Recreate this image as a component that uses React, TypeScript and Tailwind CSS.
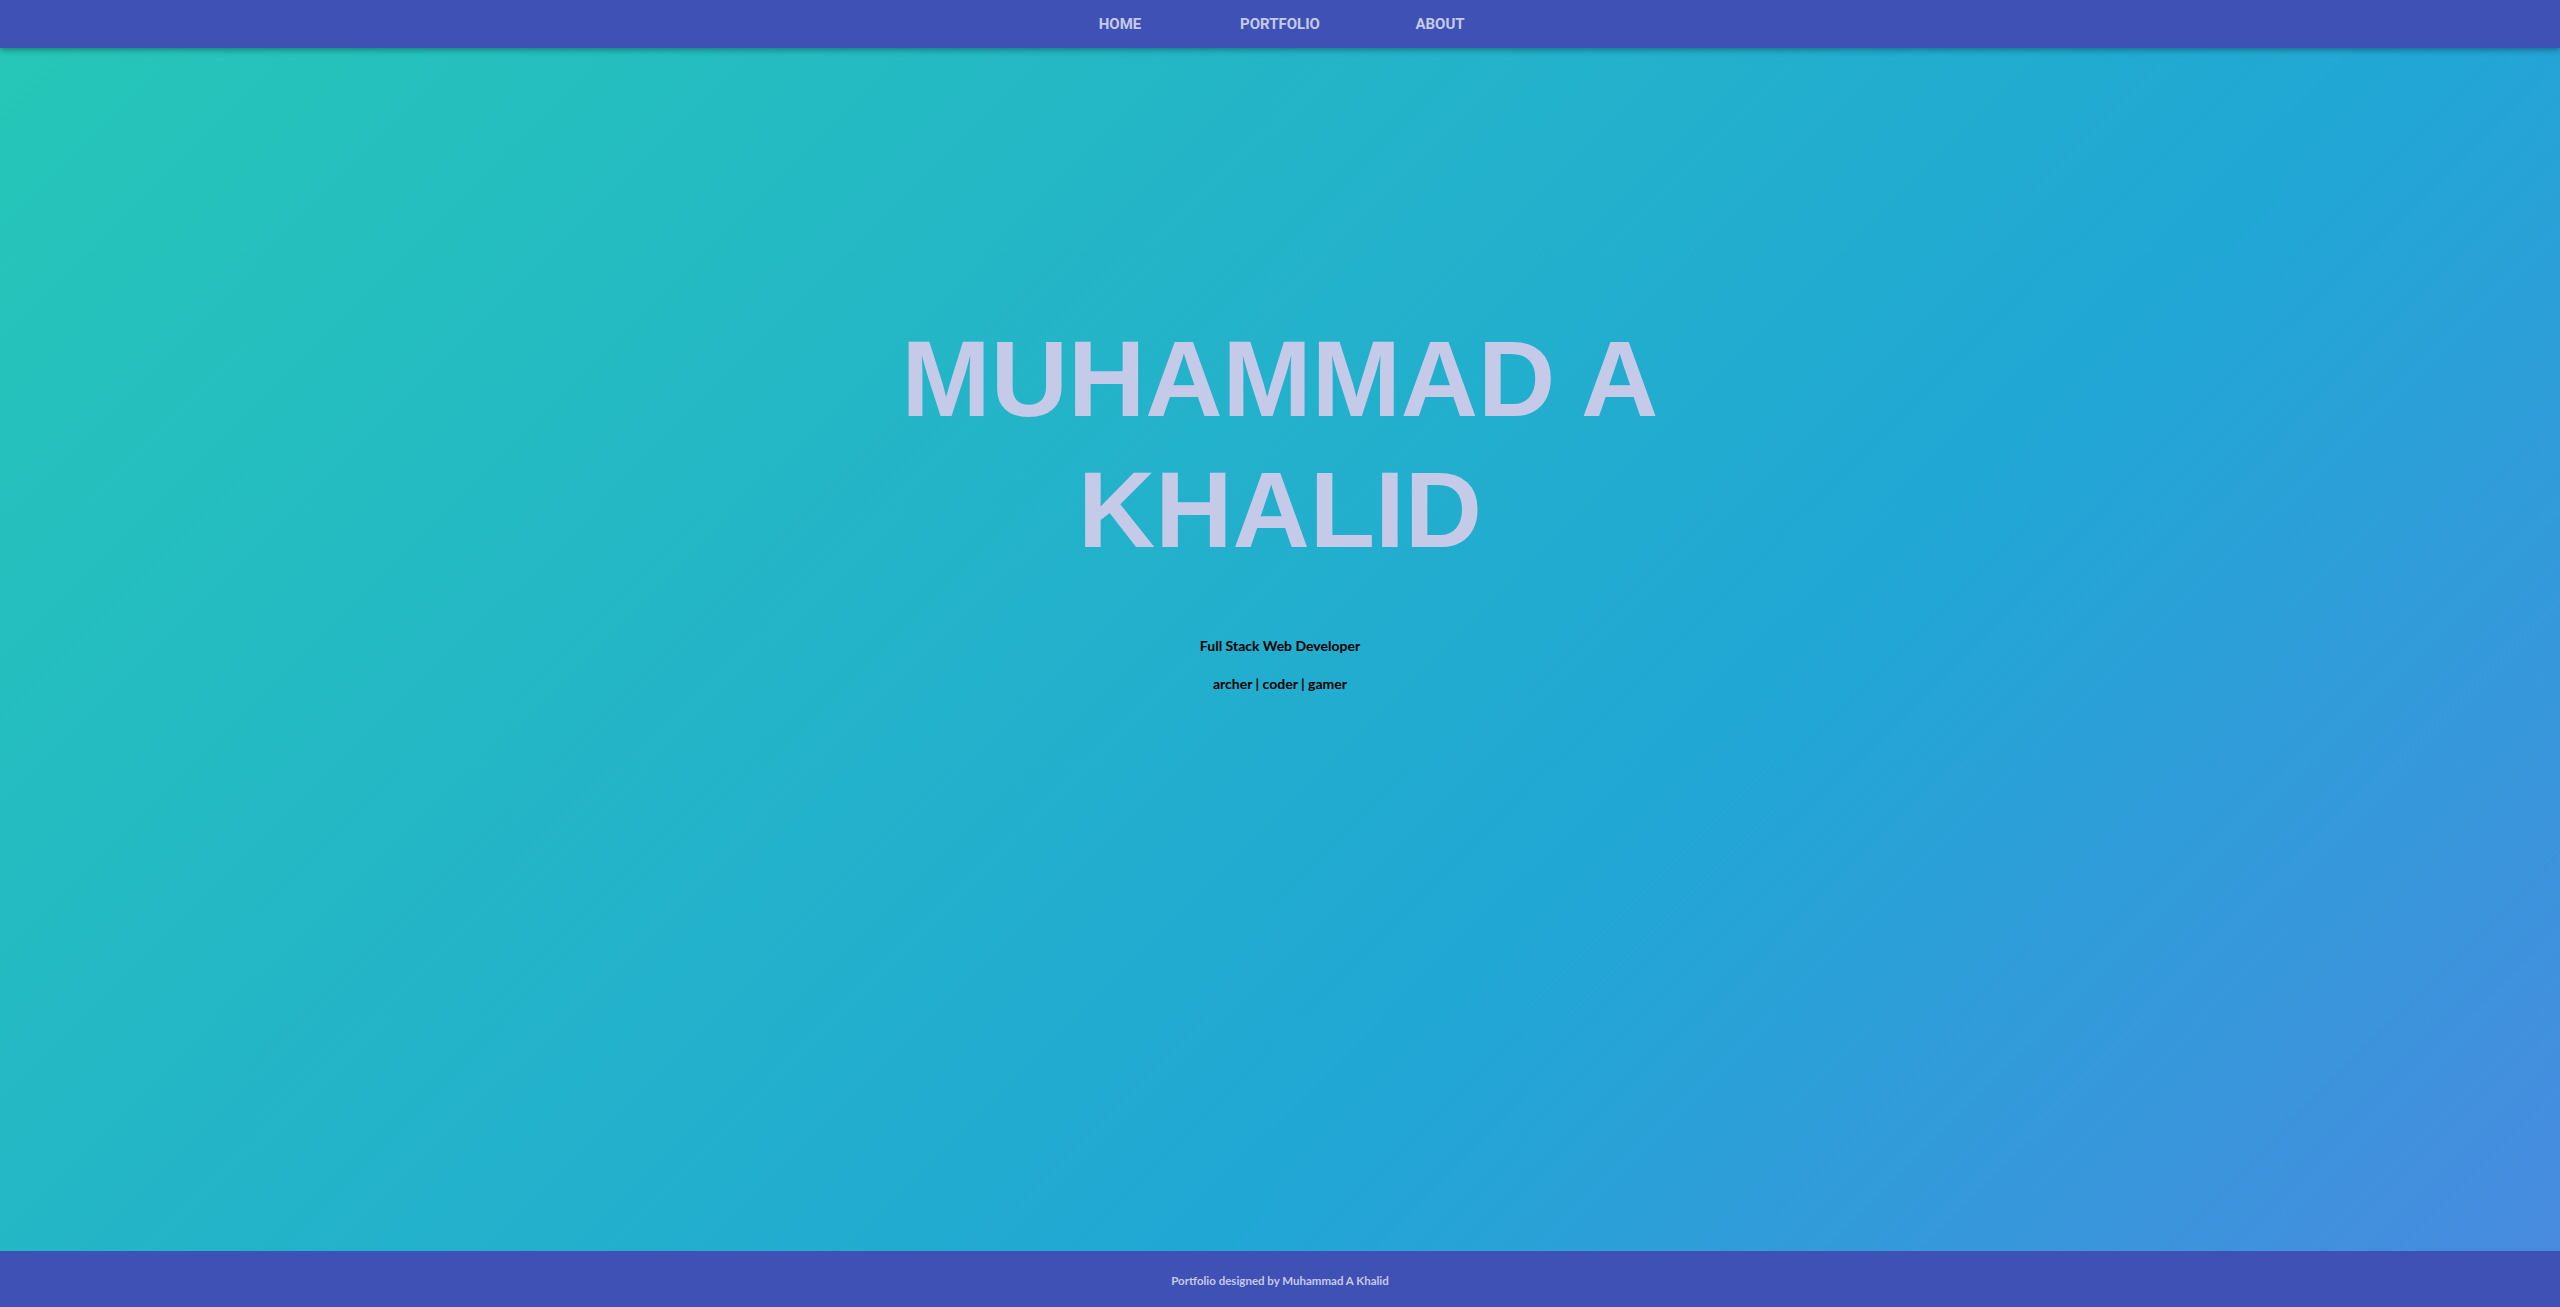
const links = ["HOME", "PORTFOLIO", "ABOUT"];

const NavBar = () => (
  <nav className="relative z-10 flex h-12 w-full shrink-0 items-center justify-center bg-[#3f51b5] shadow-[0_2px_6px_rgba(0,0,0,0.35)]">
    {links.map((label) => (
      <a
        key={label}
        href="#"
        className="w-[160px] text-center font-['Roboto',sans-serif] text-[15px] font-bold text-[#c5cae9]"
      >
        {label}
      </a>
    ))}
  </nav>
);

const Hero = () => (
  <main className="flex flex-1 flex-col items-center pt-[266px]">
    <h1 className="mx-auto max-w-[960px] text-center font-['Liberation_Sans',Arial,sans-serif] text-[107px] leading-[131px] font-bold text-[#c5cae9]">
      MUHAMMAD A KHALID
    </h1>

    <div className="mt-[60px] flex flex-col items-center gap-[18px] font-['Lato',sans-serif] text-[14px] leading-[20px] font-bold text-black">
      <p>Full Stack Web Developer</p>
      <p>archer | coder | gamer</p>
    </div>
  </main>
);

const Footer = () => (
  <footer className="flex h-14 w-full shrink-0 items-center justify-center bg-[#3f51b5] pt-1">
    <p className="font-['Lato',sans-serif] text-[11.5px] font-bold text-[#c5cae9]">
      Portfolio designed by Muhammad A Khalid
    </p>
  </footer>
);

export default function App() {
  return (
    <div className="flex h-screen w-full flex-col overflow-hidden bg-[linear-gradient(135deg,#26c7b7_0%,#21a6d5_65%,#4a8ae0_100%)]">
      <NavBar />
      <Hero />
      <Footer />
    </div>
  );
}
